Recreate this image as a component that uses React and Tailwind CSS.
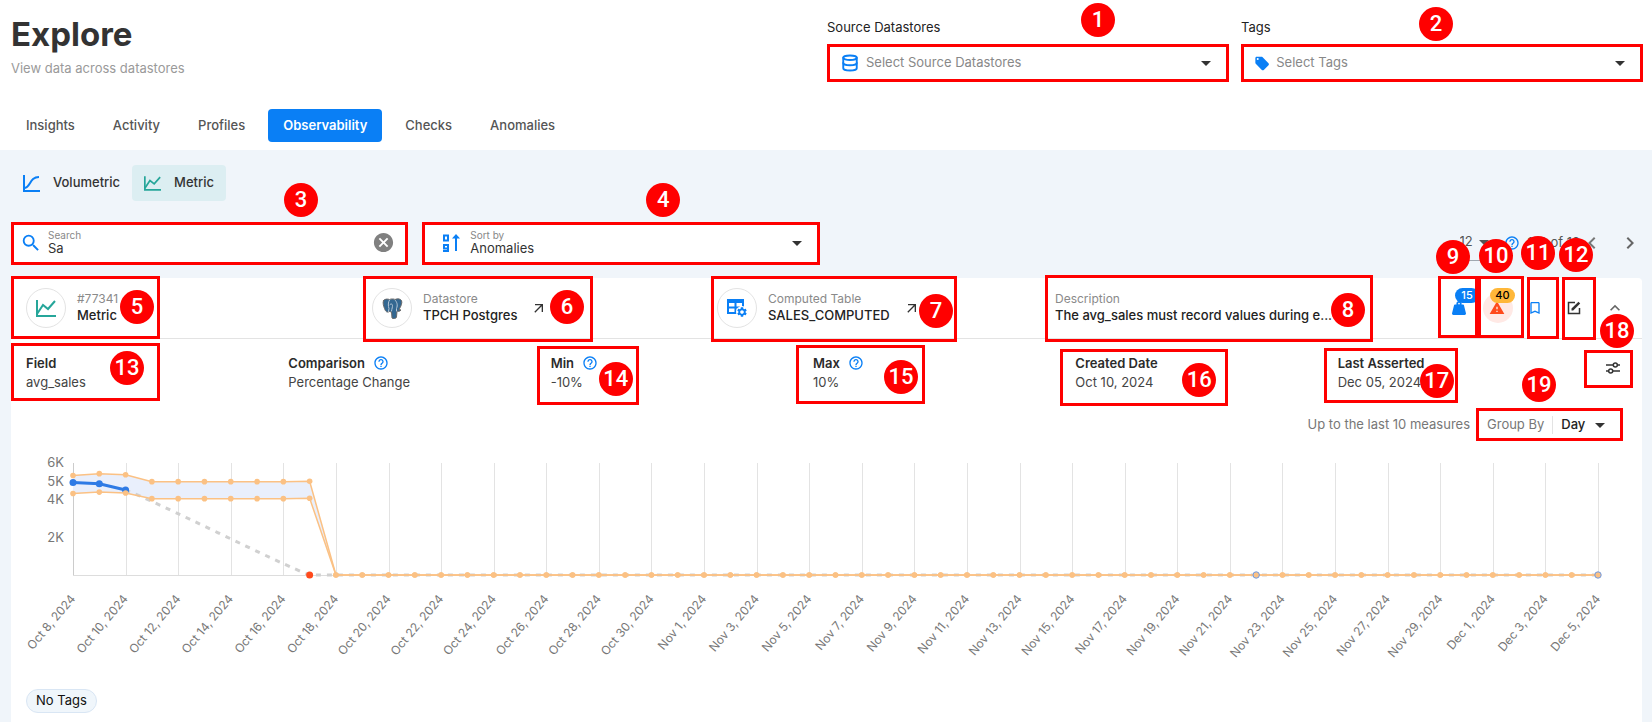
import React, { useState } from "react";
import {
  MdArrowDropDown,
  MdArrowOutward,
  MdBookmarkBorder,
  MdCancel,
  MdChevronLeft,
  MdChevronRight,
  MdHelpOutline,
  MdKeyboardArrowUp,
  MdSearch,
  MdSettings,
  MdWarning,
} from "react-icons/md";
import { FaWeightHanging } from "react-icons/fa";
import { LuDatabase } from "react-icons/lu";

const tabs = ["Insights", "Activity", "Profiles", "Observability", "Checks", "Anomalies"];

// numbered red circle of the guide
const Badge = ({ n, className }) => (
  <span
    className={`absolute z-20 flex size-[34px] items-center justify-center rounded-full bg-[#ff0000] font-[Roboto,sans-serif] text-[22px] leading-none font-medium text-white ${className}`}
  >
    {n}
  </span>
);

// red frame of the guide
const Frame = ({ className }) => (
  <span
    className={`pointer-events-none absolute z-10 border-3 border-[#ff0000] ${className}`}
  />
);

const VolumetricIcon = () => (
  <svg width="17" height="17" viewBox="0 0 17 17" fill="none" stroke="#0a7ff5" strokeWidth="2">
    <path d="M1 0v16h16" />
    <path d="M1 13c7 0 5-11 15-11" />
  </svg>
);

const MetricIcon = ({ className }) => (
  <svg className={className} viewBox="0 0 20 17" fill="none" stroke="#26a69a" strokeWidth="2">
    <path d="M1 0v16h19" />
    <path d="M1 14L7 5l5 4 7-8" />
  </svg>
);

const TagIcon = () => (
  <svg width="17" height="17" viewBox="0 0 24 24" fill="#0a7ff5">
    <path d="M5.5 7A1.5 1.5 0 0 1 4 5.5 1.5 1.5 0 0 1 5.5 4 1.5 1.5 0 0 1 7 5.5 1.5 1.5 0 0 1 5.5 7m15.91 4.58l-9-9C12.05 2.22 11.55 2 11 2H4c-1.11 0-2 .89-2 2v7c0 .55.22 1.05.59 1.41l8.99 9c.37.36.87.59 1.42.59s1.05-.23 1.41-.59l7-7c.37-.36.59-.86.59-1.41 0-.56-.23-1.06-.59-1.42z" />
  </svg>
);

const SortIcon = () => (
  <svg width="17" height="18" viewBox="0 0 17 18" fill="none" stroke="#0a7ff5" strokeWidth="2">
    <path d="M1 1.5h4v5H1z" />
    <path d="M5 14.5H1v-3.500h4v6H0" />
    <path d="M13 17V3" />
    <path d="M13 0l4 4.500H9z" fill="#0a7ff5" stroke="none" />
  </svg>
);

const PostgresIcon = () => (
  <svg width="21" height="21" viewBox="0 0 21 21" strokeLinejoin="round" strokeLinecap="round">
    <path
      d="M1.500 2.500C3 .5 6 1 7.500 1.500 9 .8 12 .8 13 1.500c2-1 5-1 6.500 1 1 2-.5 6-2.500 9l2 .5c-1 1.500-3 1.500-4 1l-.5 6c-.5 2-3.500 2-4.500 1l-.5-6-2-.5C5 15 3.500 13.500 2.500 10.500 1.500 8 .5 4.500 1.500 2.500z"
      fill="#336791"
      stroke="#6a6a6a"
    />
    <path
      d="M7.500 2c-1.500 2-1.500 6-.5 8.500l-.5 3M13 2c2 2 3 5 1.500 8.500V13M8 6.500c1-1 2.500-.5 2.500 1s-.5 3-1 5.500"
      fill="none"
      stroke="#b9c9d9"
    />
  </svg>
);

const TableCogIcon = () => (
  <span className="relative block h-5 w-[22px] text-[#0a7ff5]">
    <svg width="19" height="18" viewBox="0 0 19 18" fill="none" stroke="currentColor" strokeWidth="2">
      <path d="M11 15H2V2h15v7" />
      <path d="M2 3h15" strokeWidth="4" />
      <path d="M2 9.500h12M9.500 3v12" />
    </svg>
    <MdSettings className="absolute right-0 bottom-0 size-3 rounded-full bg-white" />
  </span>
);

const EditIcon = () => (
  <svg width="14" height="14" viewBox="0 0 14 14" fill="none" stroke="#333333" strokeWidth="1.500">
    <path d="M8 1.500H1.500v11h11V7" />
    <path d="M4.500 9.500V7.500L11.500.8l1.700 1.700-7 7z" fill="#333333" stroke="none" />
  </svg>
);

const TuneIcon = () => (
  <svg width="14" height="12" viewBox="0 0 14 12" fill="none" stroke="#333333" strokeWidth="1.500">
    <path d="M0 3h7M11.500 3H14M0 9h2.500M7 9h7" />
    <circle cx="9.300" cy="3" r="2" />
    <circle cx="4.700" cy="9" r="2" />
  </svg>
);

const Round = ({ children }) => (
  <span className="flex size-10 shrink-0 items-center justify-center rounded-full border border-[#e3e3e3] bg-white">
    {children}
  </span>
);

const Entity = ({ label, value, children, link }) => (
  <div className="flex h-full items-center">
    <Round>{children}</Round>
    <div className="ml-[11px] pb-0.5">
      <p className="text-xs leading-[17px] text-[#8a8a8a]">{label}</p>
      <p className="leading-[17px] font-medium text-[#222222]">{value}</p>
    </div>
    {link && (
      <a href="#" aria-label={`Open ${value}`} className="ml-3.5 text-[#333333]">
        <MdArrowOutward className="size-4" />
      </a>
    )}
  </div>
);

const Detail = ({ label, value, help, children }) => (
  <div className="relative">
    <dt className="flex items-center gap-2 leading-[18px] font-semibold text-[#2b2b2b]">
      {label}
      {help && <MdHelpOutline className="size-4 text-[#0a7ff5]" />}
    </dt>
    <dd className="leading-5 text-[#444444]">{value}</dd>
    {children}
  </div>
);

const months = [
  ["Oct", 31],
  ["Nov", 30],
  ["Dec", 31],
];

// day 0 is Oct 8
const dayLabel = (day) => {
  let d = 8 + day;
  let m = 0;
  while (d > months[m][1]) {
    d -= months[m][1];
    m += 1;
  }
  return `${months[m][0]} ${d}, 2024`;
};

const lastDay = 58;
const left = 62;
const base = 134;
const xOf = (day) => left + (day * 1525) / lastDay;
const yOf = (v) => base - (v * 112) / 6000;

const firstUpper = [5330, 5430, 5370, 5000, 5000, 5000, 5000, 5000, 5000, 5020];
const firstLower = [4370, 4440, 4390, 4090, 4090, 4090, 4090, 4090, 4090, 4110];
const measures = [4950, 4890, 4550];

const days = Array.from({ length: lastDay + 1 }, (_, i) => i);
const upper = days.map((d) => firstUpper[d] ?? 0);
const lower = days.map((d) => firstLower[d] ?? 0);
const points = (list) => list.map((v, d) => `${xOf(d)},${yOf(v)}`).join(" ");

const Chart = () => (
  <svg
    viewBox="0 0 1631 240"
    className="block h-auto w-full"
    fill="none"
    fontFamily="Inter, sans-serif"
  >
    {days
      .filter((d) => d % 2 === 0)
      .map((d) => (
        <g key={d}>
          <path
            d={`M${Math.round(xOf(d)) + 0.5} 22V${base}`}
            stroke={d === 0 ? "#cccccc" : "#e3e3e3"}
          />
          <text
            x={xOf(d) + 3}
            y={158}
            fill="#777777"
            fontSize="12"
            textAnchor="end"
            transform={`rotate(-50 ${xOf(d) + 3} 158)`}
          >
            {dayLabel(d)}
          </text>
        </g>
      ))}
    {[6, 5, 4, 2].map((k) => (
      <text
        key={k}
        x={left - 9}
        y={yOf(k * 1000) + 4}
        fill="#777777"
        fontSize="13"
        textAnchor="end"
      >
        {k}K
      </text>
    ))}
    <path d={`M${left} ${base + 0.5}H${xOf(lastDay)}`} stroke="#dddddd" />
    <polygon
      points={`${points(upper)} ${lower
        .map((v, d) => `${xOf(d)},${yOf(v)}`)
        .reverse()
        .join(" ")}`}
      fill="#e9effc"
    />
    <path
      d={`M${xOf(2)} ${yOf(4550)}C${xOf(3)} ${yOf(4050)} ${xOf(8)} ${yOf(500)} ${xOf(9)} ${base}H${xOf(lastDay)}`}
      stroke="#d0d0d0"
      strokeWidth="3"
      strokeDasharray="5 6"
    />
    <polyline points={points(measures)} stroke="#2f7be5" strokeWidth="3" />
    {measures.map((v, d) => (
      <circle key={d} cx={xOf(d)} cy={yOf(v)} r="3.500" fill="#2f7be5" />
    ))}
    {[upper, lower].map((list, i) => (
      <g key={i}>
        <polyline points={points(list)} stroke="#fbc184" strokeWidth="1.500" />
        {list.map((v, d) => (
          <circle key={d} cx={xOf(d)} cy={yOf(v)} r="2.800" fill="#fbc184" />
        ))}
      </g>
    ))}
    {[45, lastDay].map((d) => (
      <circle key={d} cx={xOf(d)} cy={base} r="3.200" fill="#fbc184" stroke="#6c9be8" />
    ))}
    <circle cx={xOf(9)} cy={base} r="3.500" fill="#ff4a1c" />
  </svg>
);

const App = () => {
  const [activeTab, setActiveTab] = useState("Observability");
  const [search, setSearch] = useState("Sa");

  return (
    <div className="min-h-screen overflow-hidden bg-[#f0f5fa] font-[Inter,sans-serif] text-[13px] text-[#333333]">
      <header className="bg-white pt-3 pr-[9px] pb-2 pl-[11px]">
        <div className="grid grid-cols-2">
          <div>
            <h1 className="pt-0.5 text-[33px] leading-10 font-bold">Explore</h1>
            <p className="mt-[5px] leading-[18px] text-[#9a9a9a]">View data across datastores</p>
          </div>

          <div className="grid grid-cols-2 gap-3 pt-[5px]">
            <div className="relative">
              <label htmlFor="source" className="block leading-5 text-[#222222]">
                Source Datastores
              </label>
              <Badge n={1} className="-top-3.5 left-[254px]" />
              <div className="relative mt-[7px] flex h-[38px] items-center border-3 border-[#ff0000] pl-[11px]">
                <LuDatabase className="size-[18px] shrink-0 stroke-[2.500] text-[#0a7ff5]" />
                <select
                  id="source"
                  className="w-full appearance-none bg-transparent pl-[7px] text-[#888888] outline-none"
                >
                  <option>Select Source Datastores</option>
                </select>
                <MdArrowDropDown className="pointer-events-none absolute right-2 size-6" />
              </div>
            </div>

            <div className="relative">
              <label htmlFor="tags" className="block leading-5 text-[#222222]">
                Tags
              </label>
              <Badge n={2} className="-top-2.5 left-[178px]" />
              <div className="relative mt-[7px] flex h-[38px] items-center border-3 border-[#ff0000] pl-2.5">
                <TagIcon />
                <select
                  id="tags"
                  className="w-full appearance-none bg-transparent pl-1.5 text-[#888888] outline-none"
                >
                  <option>Select Tags</option>
                </select>
                <MdArrowDropDown className="pointer-events-none absolute right-2 size-6" />
              </div>
            </div>
          </div>
        </div>

        <nav className="mt-[27px] flex gap-2">
          {tabs.map((tab) => (
            <button
              key={tab}
              onClick={() => setActiveTab(tab)}
              className={`h-[33px] rounded px-[15px] ${
                activeTab === tab
                  ? "bg-[#0a7ff5] font-semibold text-white"
                  : "font-medium text-[#555555]"
              }`}
            >
              {tab}
            </button>
          ))}
        </nav>
      </header>

      <main className="pt-[15px] pr-[10px] pl-[11px]">
        <div className="flex font-medium">
          <button className="flex h-9 items-center gap-[13px] rounded px-3">
            <VolumetricIcon />
            Volumetric
          </button>
          <button className="flex h-9 items-center gap-[13px] rounded bg-[#dceef2] px-3">
            <MetricIcon className="h-[15px] w-[17px]" />
            Metric
          </button>
        </div>

        <div className="mt-[21px] grid grid-cols-4 gap-3.5">
          <div className="relative flex h-[43px] items-center border-3 border-[#ff0000] bg-white px-1.5 pb-0.5">
            <MdSearch className="size-[22px] shrink-0 text-[#0a7ff5]" />
            <div className="flex flex-1 flex-col pl-1.5">
              <label htmlFor="search" className="text-[10px] leading-3 text-[#888888]">
                Search
              </label>
              <input
                id="search"
                value={search}
                onChange={(e) => setSearch(e.target.value)}
                className="h-[15px] w-full outline-none"
              />
            </div>
            <button aria-label="Clear search" className="mr-1" onClick={() => setSearch("")}>
              <MdCancel className="size-[23px] text-[#808080]" />
            </button>
            <Badge n={3} className="-top-[42px] left-[270px]" />
          </div>

          <div className="relative flex h-[43px] items-center border-3 border-[#ff0000] bg-white px-[18px] pb-0.5">
            <SortIcon />
            <div className="flex flex-1 flex-col pl-2.5">
              <label htmlFor="sort" className="text-[10px] leading-3 text-[#888888]">
                Sort by
              </label>
              <select
                id="sort"
                className="h-[15px] w-full appearance-none bg-transparent leading-[15px] outline-none"
              >
                <option>Anomalies</option>
              </select>
            </div>
            <MdArrowDropDown className="pointer-events-none absolute right-2 size-6" />
            <Badge n={4} className="-top-[42px] left-[221px]" />
          </div>

          <div className="col-span-2 flex items-center justify-end pb-0.5 text-[#555555]">
            <div className="relative mt-1 w-[42px] border-b border-[#a0a8b0] pb-1">
              <select
                aria-label="Items per page"
                className="h-7 w-full appearance-none bg-transparent pl-1.5 outline-none"
              >
                <option>12</option>
              </select>
              <MdArrowDropDown className="pointer-events-none absolute top-0.5 right-0 size-6" />
            </div>
            <MdHelpOutline className="ml-2 size-4 text-[#0a7ff5]" />
            <span className="ml-2">1-9 of 12</span>
            <button aria-label="Previous page">
              <MdChevronLeft className="size-6 text-[#777777]" />
            </button>
            <button aria-label="Next page" className="ml-3.5">
              <MdChevronRight className="size-6 text-[#666666]" />
            </button>
          </div>
        </div>

        <section className="mt-[13px] rounded-t bg-white">
          <div className="grid h-[61px] grid-cols-[346fr_345fr_338fr_587fr] border-b border-[#e3e3e3] pl-[15px]">
            <div className="relative">
              <Entity label="#77341" value="Metric">
                <MetricIcon className="h-[17px] w-5" />
              </Entity>
              <Frame className="-top-0.5 -left-[15px] h-[63px] w-[149px]" />
              <Badge n={5} className="top-3 left-[94px]" />
            </div>
            <div className="relative">
              <Entity label="Datastore" value="TPCH Postgres" link>
                <PostgresIcon />
              </Entity>
              <Frame className="-top-0.5 -left-[9px] h-[66px] w-[230px]" />
              <Badge n={6} className="top-3 left-[178px]" />
            </div>
            <div className="relative">
              <Entity label="Computed Table" value="SALES_COMPUTED" link>
                <TableCogIcon />
              </Entity>
              <Frame className="-top-0.5 -left-[6px] h-[66px] w-[246px]" />
              <Badge n={7} className="top-4 left-[202px]" />
            </div>
            <div className="relative flex items-center justify-between pr-2">
              <div className="pb-0.5">
                <p className="text-xs leading-[17px] text-[#8a8a8a]">Description</p>
                <p className="leading-[17px] font-medium text-[#222222]">
                  The avg_sales must record values during e...
                </p>
              </div>
              <Frame className="-top-[3px] -left-2.5 h-[67px] w-[328px]" />
              <Badge n={8} className="top-[15px] left-[276px]" />

              <div className="flex h-full">
                <div className="relative flex w-[39px] items-center justify-center">
                  <button aria-label="Weight">
                    <FaWeightHanging className="size-3.5 text-[#0a7ff5]" />
                  </button>
                  <span className="absolute top-2.5 left-4 flex h-[15px] w-6 items-center justify-center rounded-full bg-[#0a7ff5] text-[11px] font-medium text-white">
                    15
                  </span>
                  <Frame className="-top-0.5 -left-px h-[62px] w-10" />
                  <Badge n={9} className="-top-[38px] -left-[3px]" />
                </div>
                <div className="relative flex w-[39px] items-center justify-center">
                  <button
                    aria-label="Anomalies"
                    className="flex size-[30px] items-center justify-center rounded-full bg-[#ffe9e5]"
                  >
                    <MdWarning className="mr-0.5 size-4 text-[#ff4a1c]" />
                  </button>
                  <span className="absolute top-2.5 left-3 flex h-[15px] w-[25px] items-center justify-center rounded-full bg-[#ffb739] text-[11px] font-medium text-black">
                    40
                  </span>
                  <Frame className="-top-0.5 left-0 h-[62px] w-[46px]" />
                  <Badge n={10} className="-top-[39px] left-px" />
                </div>
                <div className="relative flex w-[39px] items-center justify-center">
                  <button aria-label="Bookmark" className="mr-1">
                    <MdBookmarkBorder className="size-4 text-[#0a7ff5]" />
                  </button>
                  <Frame className="-top-px left-[10px] h-[62px] w-8" />
                  <Badge n={11} className="-top-[42px] left-1" />
                </div>
                <div className="relative flex w-[39px] items-center justify-center">
                  <button aria-label="Edit" className="mr-1">
                    <EditIcon />
                  </button>
                  <Frame className="-top-px left-1.5 h-[63px] w-[34px]" />
                  <Badge n={12} className="-top-10 left-[3px]" />
                </div>
                <div className="relative flex w-[39px] items-center justify-center">
                  <button aria-label="Collapse">
                    <MdKeyboardArrowUp className="size-5 text-[#666666]" />
                  </button>
                  <Badge n={18} className="top-9 left-[5px]" />
                </div>
              </div>
            </div>
          </div>

          <div className="flex items-start pt-[15px] pr-4 pl-[15px]">
            <dl className="grid flex-1 grid-cols-6">
              <Detail label="Field" value="avg_sales">
                <Frame className="-top-[11px] -left-[15px] h-[58px] w-[149px]" />
                <Badge n={13} className="-top-[3px] left-[84px]" />
              </Detail>
              <Detail label="Comparison" value="Percentage Change" help />
              <Detail label="Min" value="-10%" help>
                <Frame className="-top-2 -left-[14px] h-[59px] w-[102px]" />
                <Badge n={14} className="top-2 left-12" />
              </Detail>
              <Detail label="Max" value="10%" help>
                <Frame className="-top-[9px] -left-[17px] h-[59px] w-[129px]" />
                <Badge n={15} className="top-1.5 left-[71px]" />
              </Detail>
              <Detail label="Created Date" value="Oct 10, 2024">
                <Frame className="-top-[5px] -left-[15px] h-[57px] w-[168px]" />
                <Badge n={16} className="top-[9px] left-[107px]" />
              </Detail>
              <Detail label="Last Asserted" value="Dec 05, 2024">
                <Frame className="-top-1.5 -left-[14px] h-[55px] w-[134px]" />
                <Badge n={17} className="top-2.5 left-[82px]" />
              </Detail>
            </dl>
            <div className="relative flex h-7 w-[26px] items-center justify-center">
              <button aria-label="Chart settings">
                <TuneIcon />
              </button>
              <Frame className="-top-1 -left-4 h-[38px] w-[49px]" />
            </div>
          </div>

          <div className="mt-4 flex items-center justify-end pr-[19px]">
            <span className="pr-1.5 text-[#777777]">Up to the last 10 measures</span>
            <div className="relative flex h-[33px] w-[147px] items-center border-3 border-[#ff0000] pl-2">
              <label htmlFor="group" className="shrink-0 text-[#777777]">
                Group By
              </label>
              <span className="ml-2 h-[18px] w-px shrink-0 bg-[#e3e3e3]" />
              <select
                id="group"
                className="w-full appearance-none bg-transparent pl-2 font-medium text-[#222222] outline-none"
              >
                <option>Day</option>
              </select>
              <MdArrowDropDown className="pointer-events-none absolute right-2 size-6" />
              <Badge n={19} className="-top-[43px] left-[43px]" />
            </div>
          </div>

          <Chart />

          <div className="px-[15px] pt-2 pb-[9px]">
            <span className="inline-flex h-6 items-center rounded-full border border-[#d9e6f4] bg-[#f0f6fb] px-[9px] text-[#111111]">
              No Tags
            </span>
          </div>
        </section>
      </main>
    </div>
  );
};

export default App;
